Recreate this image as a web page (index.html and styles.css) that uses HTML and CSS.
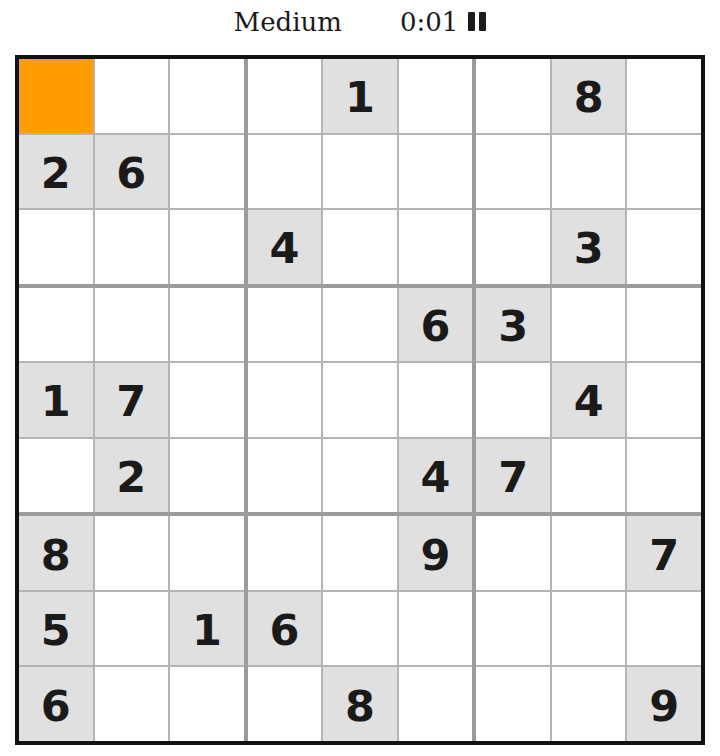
FILE: index.html
```html
<!DOCTYPE html>
<html>
<head>
<meta charset="utf-8">
<link rel="stylesheet" href="styles.css">
</head>
<body>
<header class="bar">
  <span class="level">Medium</span>
  <span class="timer">0:01</span>
  <span class="pause"><i></i><i></i></span>
</header>
<div class="board">
  <div class="box">
    <div class="cell sel"></div><div class="cell"></div><div class="cell"></div>
    <div class="cell given">2</div><div class="cell given">6</div><div class="cell"></div>
    <div class="cell"></div><div class="cell"></div><div class="cell"></div>
  </div>
  <div class="box">
    <div class="cell"></div><div class="cell given">1</div><div class="cell"></div>
    <div class="cell"></div><div class="cell"></div><div class="cell"></div>
    <div class="cell given">4</div><div class="cell"></div><div class="cell"></div>
  </div>
  <div class="box">
    <div class="cell"></div><div class="cell given">8</div><div class="cell"></div>
    <div class="cell"></div><div class="cell"></div><div class="cell"></div>
    <div class="cell"></div><div class="cell given">3</div><div class="cell"></div>
  </div>
  <div class="box">
    <div class="cell"></div><div class="cell"></div><div class="cell"></div>
    <div class="cell given">1</div><div class="cell given">7</div><div class="cell"></div>
    <div class="cell"></div><div class="cell given">2</div><div class="cell"></div>
  </div>
  <div class="box">
    <div class="cell"></div><div class="cell"></div><div class="cell given">6</div>
    <div class="cell"></div><div class="cell"></div><div class="cell"></div>
    <div class="cell"></div><div class="cell"></div><div class="cell given">4</div>
  </div>
  <div class="box">
    <div class="cell given">3</div><div class="cell"></div><div class="cell"></div>
    <div class="cell"></div><div class="cell given">4</div><div class="cell"></div>
    <div class="cell given">7</div><div class="cell"></div><div class="cell"></div>
  </div>
  <div class="box">
    <div class="cell given">8</div><div class="cell"></div><div class="cell"></div>
    <div class="cell given">5</div><div class="cell"></div><div class="cell given">1</div>
    <div class="cell given">6</div><div class="cell"></div><div class="cell"></div>
  </div>
  <div class="box">
    <div class="cell"></div><div class="cell"></div><div class="cell given">9</div>
    <div class="cell given">6</div><div class="cell"></div><div class="cell"></div>
    <div class="cell"></div><div class="cell given">8</div><div class="cell"></div>
  </div>
  <div class="box">
    <div class="cell"></div><div class="cell"></div><div class="cell given">7</div>
    <div class="cell"></div><div class="cell"></div><div class="cell"></div>
    <div class="cell"></div><div class="cell"></div><div class="cell given">9</div>
  </div>
</div>
</body>
</html>
```
FILE: styles.css
```css
html, body {
  margin: 0;
  padding: 0;
  background: #ffffff;
}
body {
  width: 720px;
  height: 756px;
  overflow: hidden;
}
.bar {
  height: 55px;
  display: flex;
  align-items: center;
  justify-content: center;
  padding-left: 0;
  padding-bottom: 12px;
  box-sizing: border-box;
  font-family: "DejaVu Serif", "Liberation Serif", serif;
  font-size: 26px;
  color: #1a1a1a;
}
.level {
  margin-right: 58px;
}
.timer {
  margin-right: 10px;
}
.pause {
  display: flex;
  gap: 4px;
  height: 19px;
}
.pause i {
  width: 7px;
  height: 19px;
  background: #1c1c1c;
  border-radius: 1px;
}
.board {
  margin-left: 15px;
  width: 682px;
  height: 682px;
  border: 4px solid #111111;
  background: #9c9c9c;
  display: grid;
  grid-template-columns: repeat(3, 1fr);
  grid-template-rows: repeat(3, 1fr);
  gap: 4px;
}
.box {
  display: grid;
  grid-template-columns: repeat(3, 1fr);
  grid-template-rows: repeat(3, 1fr);
  gap: 2px;
  background: #b4b4b4;
}
.cell {
  background: #ffffff;
  display: flex;
  align-items: center;
  justify-content: center;
  font-family: "DejaVu Sans", "Liberation Sans", sans-serif;
  font-weight: bold;
  font-size: 43px;
  color: #1a1a1a;
  padding-top: 3px;
  box-sizing: border-box;
}
.given {
  background: #e0e0e0;
}
.sel {
  background: #ff9c00;
}
```
